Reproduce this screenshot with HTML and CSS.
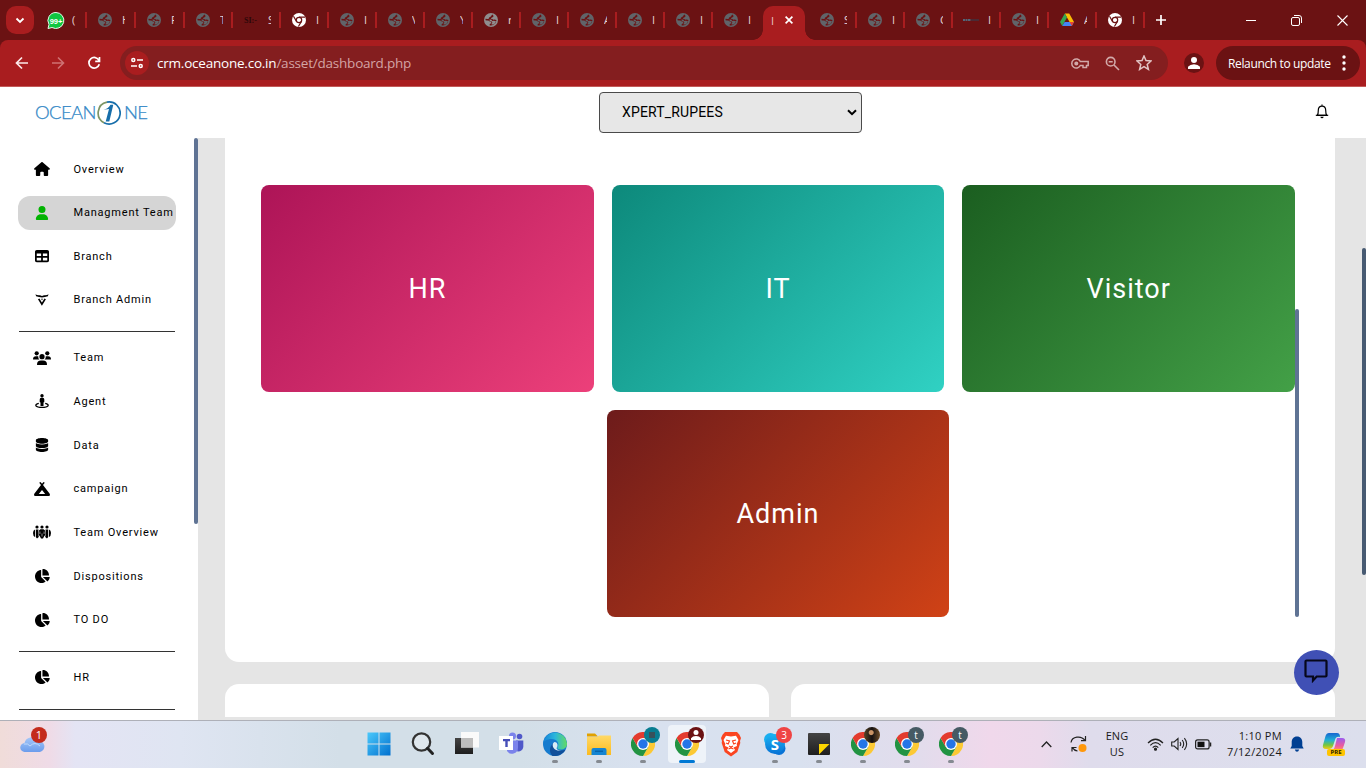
FILE: index.html
```html
<!DOCTYPE html>
<html lang="en">
<head>
<meta charset="utf-8">
<title>Dashboard</title>
<link rel="stylesheet" href="styles.css">
</head>
<body>
<svg class="sprite" aria-hidden="true">
  <defs>
    <linearGradient id="gWin" x1="0" y1="0" x2="1" y2="1"><stop offset="0" stop-color="#4cc9fb"/><stop offset="1" stop-color="#0070cf"/></linearGradient>
    <linearGradient id="gEdge" x1="0" y1="0" x2="1" y2="0"><stop offset="0" stop-color="#1683d8"/><stop offset=".5" stop-color="#2cb6dc"/><stop offset="1" stop-color="#63db63"/></linearGradient>
    <linearGradient id="gFolder" x1="0" y1="0" x2="0" y2="1"><stop offset="0" stop-color="#ffd968"/><stop offset="1" stop-color="#fcbb1e"/></linearGradient>
    <linearGradient id="gDark" x1="0" y1="0" x2="0" y2="1"><stop offset="0" stop-color="#444"/><stop offset="1" stop-color="#1e1e1e"/></linearGradient>
    <linearGradient id="gCloud" x1="0" y1="0" x2="0" y2="1"><stop offset="0" stop-color="#a5c7f8"/><stop offset="1" stop-color="#6b9cec"/></linearGradient>
    <linearGradient id="gSkype" x1="0" y1="0" x2="0" y2="1"><stop offset="0" stop-color="#1cb4f2"/><stop offset="1" stop-color="#0773d6"/></linearGradient>
    <linearGradient id="gPilotA" x1="0" y1="0" x2="0" y2="1"><stop offset="0" stop-color="#1766d1"/><stop offset=".45" stop-color="#21b1d5"/><stop offset=".75" stop-color="#76c63e"/><stop offset="1" stop-color="#f1cb16"/></linearGradient>
    <linearGradient id="gPilotB" x1="0" y1="0" x2="0" y2="1"><stop offset="0" stop-color="#9a5cf0"/><stop offset=".6" stop-color="#ed5c9c"/><stop offset="1" stop-color="#ff9862"/></linearGradient>
  </defs>
  <symbol id="globe" viewBox="0 0 14 14"><circle cx="7" cy="7" r="7" fill="currentColor"/><path d="M8.300 1.500Q9.500 2 9.500 3.200 9.300 4.200 8 4.400 7 4.600 6.900 5.800 8.500 5.800 9.300 6.700 10.800 6.300 12.500 7 12.300 10 9.500 11.800 7.500 12.800 5.500 12.300 5.500 10.800 6.800 10.500 7.800 9.800 7 8.800 5 8.700 4.300 7.600 3 7.400 1.500 7.300 1.400 6.500 1.600 5.800 3 6 4.500 5.900 4.800 4 6.500 3.700 7 2Z" fill="#6b1213"/><path d="M5.200 6.700q2.600-.5 3 1.300 2.300-.5 3.800.3-.6 2.200-2.500 3.200-1.500.3-2.200-.5 1.800-1.300.5-2.600-2.200.1-2.600-1.700Z" fill="currentColor"/></symbol>
  <symbol id="chromeWhite" viewBox="0 0 14 14"><circle cx="7" cy="7" r="7" fill="#fff"/><circle cx="7" cy="7" r="2.700" fill="none" stroke="#6b1213" stroke-width="1.200"/><path d="M7 4.200h6M4.500 8.400 1.500 3.300M9.400 8.400 6.400 13.500" stroke="#6b1213" stroke-width="1.200"/></symbol>
  <symbol id="chrome" viewBox="0 0 24 24"><path d="M1.600 6A12 12 0 0 1 22.400 6H12Z" fill="#e33b2e"/><path d="M22.400 6A12 12 0 0 1 12 24L17.200 15 12 6Z" fill="#fcc934"/><path d="M12 24A12 12 0 0 1 1.600 6L6.800 15 17.200 15Z" fill="#229342"/><path d="M1.600 6 6.800 15 12 6Z" fill="#e33b2e"/><circle cx="12" cy="12" r="6" fill="#fff"/><circle cx="12" cy="12" r="4.700" fill="#2475e8"/></symbol>
  <symbol id="pie" viewBox="0 0 576 512"><path d="M304 240V16.600c0-9 7-16.600 16-16.600C443.700 0 544 100.300 544 224c0 9-7.600 16-16.600 16H304zM32 272C32 150.700 122.100 50.300 239 34.300c9.200-1.300 17 6.100 17 15.400V288L412.500 444.500c6.700 6.700 6.200 17.700-1.500 23.100C371.800 495.600 323.800 512 272 512C139.500 512 32 404.600 32 272zm526.400 16c9.300 0 16.600 7.800 15.400 17c-7.700 55.900-34.600 105.600-73.900 142.300c-6 5.600-15.400 5.200-21.200-.7L320 288H558.400z"/></symbol>
</svg>

<header class="browser">
  <div class="tabstrip">
    <div class="tabsearch"><svg width="10" height="7" viewBox="0 0 10 7"><path d="M1.500 1.500 5 5l3.500-3.500" fill="none" stroke="#fff" stroke-width="1.800"/></svg></div>
    <div class="tab tab-first"><svg width="18" height="17" viewBox="0 0 18 17"><path d="M9 .5a8 8 0 1 1-4 15L1 16.500l1-4A8 8 0 0 1 9 .5Z" fill="#10c741" stroke="#e9f7ec"/><text x="9" y="11.500" text-anchor="middle" class="wa">99+</text></svg><span>(</span></div>
    <div class="tab wide"><svg class="fav"><use href="#globe"/></svg><span>H</span></div>
    <div class="tab wide"><svg class="fav"><use href="#globe"/></svg><span>F</span></div>
    <div class="tab"><svg class="fav"><use href="#globe"/></svg><span>T</span></div>
    <div class="tab"><b class="favtext">SI:-</b><span>S</span></div>
    <div class="tab"><svg class="fav"><use href="#chromeWhite"/></svg><span>I</span></div>
    <div class="tab"><svg class="fav"><use href="#globe"/></svg><span>I</span></div>
    <div class="tab"><svg class="fav"><use href="#globe"/></svg><span>V</span></div>
    <div class="tab"><svg class="fav"><use href="#globe"/></svg><span>Y</span></div>
    <div class="tab"><svg class="fav light"><use href="#globe"/></svg><span>r</span></div>
    <div class="tab"><svg class="fav"><use href="#globe"/></svg><span>I</span></div>
    <div class="tab"><svg class="fav"><use href="#globe"/></svg><span>A</span></div>
    <div class="tab"><svg class="fav"><use href="#globe"/></svg><span>I</span></div>
    <div class="tab"><svg class="fav"><use href="#globe"/></svg><span>I</span></div>
    <div class="tab last"><svg class="fav"><use href="#globe"/></svg><span>I</span></div>
    <div class="tab-active"><span>I</span><svg width="8" height="8" viewBox="0 0 8 8"><path d="m.6.6 6.800 6.800M7.400.6.6 7.400" stroke="#fff" stroke-width="1.700"/></svg></div>
    <div class="tab"><svg class="fav"><use href="#globe"/></svg><span>S</span></div>
    <div class="tab"><svg class="fav"><use href="#globe"/></svg><span>I</span></div>
    <div class="tab"><svg class="fav"><use href="#globe"/></svg><span>C</span></div>
    <div class="tab"><svg class="fav" viewBox="0 0 14 14"><path d="M-1 7h8" stroke="#536779" stroke-width="2" stroke-dasharray="2 .5"/><path d="M7 7h8" stroke="#3f3442" stroke-width="1.500"/></svg><span>I</span></div>
    <div class="tab"><svg class="fav"><use href="#globe"/></svg><span>I</span></div>
    <div class="tab"><svg class="fav" viewBox="0 0 14 14"><path d="M4.800.6h4.400L14 9H9.600Z" fill="#fbbc04"/><path d="M4.800.6 0 9l2.200 4L7 4.500Z" fill="#34a853"/><path d="M4.600 9H14l-2.200 4H2.200Z" fill="#4285f4"/><path d="M9.600 9H14l-2.200 4Z" fill="#ea4335"/></svg><span>A</span></div>
    <div class="tab"><svg class="fav"><use href="#chromeWhite"/></svg><span>I</span></div>
    <svg class="newtab" width="10" height="10" viewBox="0 0 10 10"><path d="M5 0v10M0 5h10" stroke="#fff" stroke-width="1.700"/></svg>
    <div class="winctl">
      <svg width="10" height="11" viewBox="0 0 10 11"><path d="M0 5.500h10" stroke="#fff"/></svg>
      <svg width="11" height="11" viewBox="0 0 11 11"><rect x=".5" y="2.500" width="8" height="8" rx="1.500" fill="none" stroke="#fff"/><path d="M3 .5h5a2.500 2.500 0 0 1 2.500 2.500v5" fill="none" stroke="#fff"/></svg>
      <svg width="11" height="11" viewBox="0 0 11 11"><path d="m.5.5 10 10m0-10-10 10" stroke="#fff" stroke-width="1.100"/></svg>
    </div>
  </div>
  <div class="toolbar">
    <svg class="nav" viewBox="0 0 14 14"><path d="M13 7H2M7 1.500 1.500 7 7 12.500" fill="none" stroke="#fbe9e9" stroke-width="1.700"/></svg>
    <svg class="nav" viewBox="0 0 14 14"><path d="M1 7h11M7 1.500 12.500 7 7 12.500" fill="none" stroke="#cf7273" stroke-width="1.600"/></svg>
    <svg class="nav" viewBox="0 0 14 14"><path d="M12 4.500A5.300 5.300 0 1 0 12.300 8.300M12.500 1v4.300H8.200" fill="none" stroke="#fff" stroke-width="1.700"/></svg>
    <div class="address">
      <div class="siteinfo"><svg width="12" height="12" viewBox="0 0 12 12" fill="none" stroke="#fff" stroke-width="1.500"><circle cx="2.300" cy="3" r="1.500"/><path d="M6 3h6M0 9h6"/><circle cx="9.700" cy="9" r="1.500"/></svg></div>
      <div class="url"><b>crm.oceanone.co.in</b>/asset/dashboard.php</div>
      <div class="addr-icons">
        <svg width="18" height="11" viewBox="0 0 18 11" fill="none" stroke="#d2a9a9" stroke-width="1.500"><path d="M9.300 3.500a4.500 4.500 0 1 0 0 4H12v2h3.500v-2h1.700v-4Z"/><circle cx="5.300" cy="5.500" r="1.300" fill="#d2a9a9"/></svg>
        <svg width="15" height="15" viewBox="0 0 15 15" fill="none" stroke="#d2a9a9" stroke-width="1.600"><circle cx="5.700" cy="5.700" r="4.300"/><path d="m9 9 5 5M3.700 5.700h4"/></svg>
        <svg width="16" height="16" viewBox="0 0 16 16"><path d="m8 1 2 4.600 5 .4-3.800 3.400 1.200 5L8 11.700l-4.400 2.700 1.200-5L1 6l5-.4Z" fill="none" stroke="#e2c4c4" stroke-width="1.500"/></svg>
      </div>
    </div>
    <div class="profile"><svg width="12" height="12" viewBox="0 0 12 12" fill="#fff"><circle cx="6" cy="3" r="3"/><path d="M0 12V9.800Q2 7.200 6 7.200t6 2.600V12Z"/></svg></div>
    <div class="relaunch"><span>Relaunch to update</span><svg width="4" height="16" viewBox="0 0 4 16" fill="#fff"><circle cx="2" cy="2" r="1.700"/><circle cx="2" cy="8" r="1.700"/><circle cx="2" cy="14" r="1.700"/></svg></div>
  </div>
</header>

<div class="page">
  <div class="topbar">
    <div class="logo"><span class="logo-l">OCEAN</span><svg width="24" height="24" viewBox="0 0 24 24" fill="none"><path d="M10 1.200A11 11 0 0 0 7 21.700" stroke="#7c9565" stroke-width="1.700"/><path d="M10 1.200A11 11 0 1 1 7 21.700" stroke="#176eaa" stroke-width="1.700"/><path d="M6.500 8.800c3.500-.5 5.500-2.700 7-5h2.800L12.300 20.500H8.700l3.300-12.500Z" fill="#176eaa"/></svg><span class="logo-r">NE</span></div>
    <div class="select"><span>XPERT_RUPEES</span><svg width="10" height="7" viewBox="0 0 10 7"><path d="m1 1.200 4 4 4-4" fill="none" stroke="#000" stroke-width="2"/></svg></div>
    <svg class="bell" width="14" height="15" viewBox="0 0 14 15"><path d="M7 .4v1.500M2.300 11.300c1-1.300 1-2.800 1-5C3.300 3.700 4.800 2.100 7 2.100s3.700 1.600 3.700 4.200c0 2.200 0 3.700 1 5Z" fill="none" stroke="#000" stroke-width="1.200"/><path d="M.8 11.300h12.400" stroke="#000" stroke-width="1.200"/><path d="M5.300 12.800h3.400Q8.300 14.300 7 14.300t-1.700-1.500Z"/></svg>
  </div>
  <div class="body">
    <nav class="sidebar">
      <a class="item"><svg viewBox="0 0 576 512"><path d="M575.800 255.500c0 18-15 32.100-32 32.100h-32l.7 184.400c0 22.100-17.900 40-40 40H392c-22.100 0-40-17.900-40-40V384c0-17.700-14.300-32-32-32H256c-17.700 0-32 14.300-32 32v88c0 22.100-17.900 40-40 40H104c-22.100 0-40-17.900-40-40V287.600H32c-18 0-32-14-32-32.100c0-9 3-17 10-24L266.400 8c7-7 15-8 22-8s15 2 21 7L564.800 231.500c8 7 12 15 11 24z"/></svg>Overview</a>
      <a class="item on"><svg viewBox="0 0 448 512"><path d="M224 256A128 128 0 1 0 224 0a128 128 0 1 0 0 256zm-45.700 48C79.800 304 0 383.800 0 482.300C0 498.700 13.300 512 29.700 512H418.300c16.400 0 29.700-13.300 29.700-29.700C448 383.800 368.200 304 269.700 304H178.300z"/></svg>Managment Team</a>
      <a class="item"><svg viewBox="0 0 512 512"><path d="M64 256V160H224v96H64zm0 64H224v96H64V320zm224 96V320H448v96H288zM448 256H288V160H448v96zM64 32C28.700 32 0 60.700 0 96V416c0 35.300 28.700 64 64 64H448c35.300 0 64-28.700 64-64V96c0-35.300-28.700-64-64-64H64z"/></svg>Branch</a>
      <a class="item"><svg viewBox="0 0 14 14"><path d="M.5 1.200Q2 2.500 5 2.200L7 3.100l2-.9q3 .3 4.500-1l-.6 2.100Q10 4.300 7 4.400 4 4.300 1.100 3.300Z"/><path d="m3.700 5.900 3.200 5.300 3.300-5.300" fill="none" stroke="#000" stroke-width="1.700"/><path d="M6 5.800h2l-1 1.400Z"/></svg>Branch Admin</a>
      <hr>
      <a class="item"><svg viewBox="0 0 18 14"><circle cx="3.700" cy="2.300" r="2.100"/><circle cx="14.300" cy="2.300" r="2.100"/><circle cx="9" cy="5.700" r="2.600"/><path d="M0 8.200Q0 5.200 3 5.200h2.200q-.2 2.200 1.200 3.400H.6Q0 8.600 0 8.200ZM18 8.200q0-3-3-3h-2.200q.2 2.200-1.200 3.400h5.800q.6 0 .6-.4ZM4 13.400q0-4 4-4h2q4 0 4 4 0 .6-.6.6H4.600Q4 14 4 13.400Z"/></svg>Team</a>
      <a class="item"><svg viewBox="0 0 14 14"><circle cx="7" cy="1.700" r="1.700"/><path d="M4.700 5.500q0-1.700 1.500-1.700h1.600q1.500 0 1.500 1.700V8l-.8.400V12h-3V8.400L4.700 8Z"/><path d="M3.800 9.400C-1.300 10.500.3 13.300 7 13.300s8.300-2.800 3.200-3.900" fill="none" stroke="#000" stroke-width="1.300"/></svg>Agent</a>
      <a class="item"><svg viewBox="0 0 448 512"><path d="M448 80v48c0 44.200-100.300 80-224 80S0 172.200 0 128V80C0 35.800 100.300 0 224 0S448 35.800 448 80zM393.200 214.700c20.800-7.400 39.900-16.900 54.800-28.600V288c0 44.200-100.300 80-224 80S0 332.200 0 288V186.100c14.900 11.800 34 21.200 54.800 28.600C99.700 230.700 159.500 240 224 240s124.300-9.300 169.200-25.300zM0 346.100c14.900 11.800 34 21.200 54.800 28.600C99.700 390.700 159.500 400 224 400s124.300-9.300 169.200-25.300c20.800-7.400 39.900-16.900 54.800-28.600V432c0 44.200-100.300 80-224 80S0 476.200 0 432V346.100z"/></svg>Data</a>
      <a class="item"><svg viewBox="0 0 16 14"><path fill-rule="evenodd" d="M5.200.8 6.500 0 8 1.700 9.500 0l1.300.8L9 3.100l6.700 8.700q.9 2.200-1 2.200H1.300q-1.900 0-1-2.200L7 3.100ZM8 8l-3.200 4h6.400Z"/></svg>campaign</a>
      <a class="item"><svg viewBox="0 0 18 14"><circle cx="4" cy="2" r="1.600"/><circle cx="9" cy="2" r="1.600"/><circle cx="14" cy="2" r="1.600"/><path d="M2 4.500Q0 5 0 8t2 4ZM16 4.500Q18 5 18 8t-2 4ZM2.800 4.500h2.700Q4.500 8 5.800 12L4 13.500 2.800 12ZM15.200 4.500h-2.700q1 3.500-.3 7.500l1.800 1.500 1.200-1.500ZM7.500 4.300h3q2 .7 2 3.700 0 2.500-1.500 3.500l-1 2H8l-1-2Q5.500 10.500 5.500 8q0-3 2-3.700Z"/><path d="M9 8.500v3M6.900 6.500v2.500M11.100 6.500v2.500" stroke="#ccc" stroke-width=".7"/></svg>Team Overview</a>
      <a class="item"><svg><use href="#pie"/></svg>Dispositions</a>
      <a class="item"><svg><use href="#pie"/></svg>TO DO</a>
      <hr>
      <a class="item"><svg><use href="#pie"/></svg>HR</a>
      <hr>
      <i class="side-thumb"></i>
    </nav>
    <main class="main">
      <section class="panel">
        <div class="cards">
          <div class="card hr">HR</div><div class="card it">IT</div><div class="card visitor">Visitor</div><div class="card admin">Admin</div>
          <i class="cards-thumb"></i>
        </div>
      </section>
      <div class="lower"><section></section><section></section></div>
    </main>
  </div>
  <i class="page-thumb"></i>
  <div class="chat"><svg width="24" height="24" viewBox="0 0 24 24"><path d="M2.500 1.500h19q1 0 1 1v14q0 1-1 1H12.700L9 21.500v-4H2.500q-1 0-1-1v-14q0-1 1-1Z" fill="none" stroke="#06071a" stroke-width="2.200"/></svg></div>
</div>

<footer class="taskbar">
  <div class="weather"><svg width="25" height="16" viewBox="0 0 25 16"><path d="M5 16a4.500 4.500 0 0 1-.5-9A7 7 0 0 1 17.500 5 5.500 5.500 0 0 1 20 16Z" fill="url(#gCloud)"/><path d="M4 8q4-1 6 2 5-5 10 0" stroke="#bfd9fb" fill="none"/></svg><em>1</em></div>
  <div class="apps">
    <div class="app"><svg viewBox="0 0 24 24"><path d="M.5.5h11v11H.5ZM12.500.5h11v11h-11ZM.5 12.500h11v11H.5ZM12.500 12.500h11v11h-11Z" fill="url(#gWin)"/></svg></div>
    <div class="app"><svg viewBox="0 0 24 24"><circle cx="10.500" cy="10" r="8.700" fill="#dfe7ed" stroke="#333" stroke-width="2.200"/><path d="m16.500 16.300 5 5.200" stroke="#222" stroke-width="3" stroke-linecap="round"/></svg></div>
    <div class="app"><svg viewBox="0 0 24 24"><path d="M0 6h18v16H0Z" fill="url(#gDark)"/><path d="M6 0h18v15.500H6Z" fill="#fafafa"/><path d="M6 6h12v9.500H6Z" fill="#bdbdbd"/></svg></div>
    <div class="app"><svg viewBox="0 0 24 24"><circle cx="13.500" cy="4" r="3.500" fill="#7b83eb"/><circle cx="20.500" cy="4.500" r="2.800" fill="#5059c9"/><path d="M17 8.500h7.300V15a5 5 0 0 1-6 4.500Z" fill="#5059c9"/><path d="M8 8.500h11V16a6 6 0 0 1-11 3Z" fill="#7b83eb"/><path d="M0 4h14v14H0Z" fill="#fff"/><path d="M4 7h7v2.200H8.700V15H6.300V9.200H4Z" fill="#464eb8"/></svg></div>
    <div class="app run"><svg viewBox="0 0 24 24"><circle cx="12" cy="12" r="12" fill="#167bce"/><path d="M.2 10.500A12 12 0 0 1 24 11.500c0 4-3 6-6.500 6-2.500 0-4-1-3-2.500C17 11.500 14 7 8.500 7 4 7 .5 9.500.2 10.500Z" fill="url(#gEdge)"/><path d="M9.500 24C5 20 7 12.500 11.500 10.500 9 15 13 20.500 22.500 17.700 20 22 15 24.500 9.500 24Z" fill="#11509b"/><path d="M11.500 10c-2 1-2.500 4-.5 6.500 2 2.200 5 2.500 7 1.700-4 0-5-1.500-4-3 1.200-2 .5-5-2.500-5.200Z" fill="#d9edf6"/></svg></div>
    <div class="app run"><svg viewBox="0 0 24 24"><path d="M0 1.500h8l3 3H0Z" fill="#e1a100"/><path d="M0 5h10l2-1.500h12V23H0Z" fill="url(#gFolder)"/><path d="M4.500 23v-5q0-2 2-2h11q2 0 2 2v5Z" fill="#1585d2"/><path d="M8 19.300h8" stroke="#0864aa" stroke-width="1.500"/></svg></div>
    <div class="app run"><svg><use href="#chrome"/></svg><em class="teal"><i></i></em></div>
    <div class="app run cur"><svg><use href="#chrome"/></svg><em class="maroon"><svg width="10" height="10" viewBox="0 0 12 12" fill="#fff"><circle cx="6" cy="3" r="3"/><path d="M0 12V9.800Q2 7.200 6 7.200t6 2.600V12Z"/></svg></em></div>
    <div class="app"><svg viewBox="0 0 24 24"><path d="M6 0h12l2.300 2.500L22 6l-1 3 .3 2-3 9L12 24.500 5.700 20l-3-9 .3-2-1-3 1.700-3.500Z" fill="#fb4521"/><path d="M12 4.500 17 3.700 19.500 8l-1.800 4 .3 2-3.500 1.500L16 18l-4 3-4-3 1.500-2.500L6 14l.3-2L4.500 8 7 3.700Z" fill="#fff"/><path d="m7 8 3.500 1L9.200 12 7 11M17 8l-3.500 1 1.300 3 2.200-1M10 14l2 1 2-1M9.500 17l2.500-1 2.500 1" fill="none" stroke="#fb4521" stroke-width="1.200"/></svg></div>
    <div class="app run"><svg viewBox="0 0 24 24"><circle cx="7.500" cy="7.500" r="6.500" fill="#18aef0"/><circle cx="16" cy="16.500" r="6.500" fill="#0873d6"/><circle cx="12" cy="12" r="10" fill="url(#gSkype)"/><text x="11.800" y="17.500" text-anchor="middle" class="skype">S</text></svg><em class="red">3</em></div>
    <div class="app run"><svg viewBox="0 0 24 24"><rect x="1" y="1" width="22" height="22" rx="1" fill="url(#gDark)"/><path d="M12 12h10.500L12 22.500Z" fill="#fcd500"/></svg></div>
    <div class="app run"><svg><use href="#chrome"/></svg><em class="photo"></em></div>
    <div class="app run"><svg><use href="#chrome"/></svg><em class="slate">t</em></div>
    <div class="app run"><svg><use href="#chrome"/></svg><em class="slate">t</em></div>
  </div>
  <div class="tray">
    <svg class="t-up" width="11" height="7" viewBox="0 0 11 7"><path d="m.7 6 4.800-5 4.800 5" fill="none" stroke="#222" stroke-width="1.300"/></svg>
    <svg class="t-sync" width="17" height="18" viewBox="0 0 17 18"><path d="M1 7.500C2 1.500 11 0 15 5.500M15.500 1v4.700H11M2 16.500v-4h4.500M2.300 12.700q2 3 5.200 3.300" fill="none" stroke="#222" stroke-width="1.200"/><circle cx="12.500" cy="13" r="4" fill="#ff980b"/></svg>
    <div class="lang">ENG<br>US</div>
    <svg class="t-wifi" width="17" height="13" viewBox="0 0 17 13" fill="none" stroke="#222" stroke-width="1.200"><path d="M1 5q7.500-7.500 15 0M3.300 7.300q5.200-5.200 10.400 0M5.700 9.600q2.800-2.800 5.600 0"/><circle cx="8.500" cy="11.200" r="1" fill="#222"/></svg>
    <svg class="t-vol" width="17" height="14" viewBox="0 0 17 14" fill="none" stroke="#222" stroke-width="1.100"><path d="M.7 5v4h2.500L7 12.500v-11L3.200 5ZM9 5q1.500 2 0 4M11.200 3q3 4 0 8M13.400 1.200q4.500 5.800 0 11.600"/></svg>
    <svg class="t-bat" width="17" height="11" viewBox="0 0 17 11"><rect x=".6" y=".9" width="13.500" height="9" rx="2" fill="none" stroke="#222" stroke-width="1.200"/><rect x="2.500" y="2.700" width="7" height="5.400" fill="#111"/><path d="M15.500 3.500v4" stroke="#222" stroke-width="1.500"/></svg>
    <div class="clock">1:10 PM<br>7/12/2024</div>
    <svg class="t-bell" width="14" height="16" viewBox="0 0 14 16" fill="#003f92"><path d="M7 .5c3.500 0 5.300 2.500 5.300 5.500v4l1.400 2.500H.3L1.700 10V6C1.700 3 3.500.5 7 .5ZM4.800 13.500h4.400Q8.500 15.700 7 15.700t-2.200-2.200Z"/></svg>
    <div class="pilot"><svg width="24" height="20" viewBox="0 0 24 20"><path d="M7 1h8q3 0 3 4-4-1-5 3l-2 6q-1 3-4 3H4q-4 0-3-4l2.500-9Q4.500 1 7 1Z" fill="url(#gPilotA)"/><path d="M15 6h5q4 0 3 4l-2 6q-1 3-4 3H9q3-1 4-5Z" fill="url(#gPilotB)"/></svg><b>PRE</b></div>
  </div>
</footer>
</body>
</html>
```
FILE: styles.css
```css
* { box-sizing: border-box; }
body { margin: 0; width: 1366px; height: 768px; overflow: hidden; display: flex; flex-direction: column; font-family: Roboto, sans-serif; background: #e5e5e5; }
svg { display: block; flex: none; }
em, i { font-style: normal; }
.sprite { position: absolute; width: 0; height: 0; }

/* browser chrome */
.browser { height: 87px; flex: none; background: #6b1213; font-family: "Open Sans", "Noto Sans", sans-serif; }
.tabstrip { height: 40px; display: flex; align-items: center; }
.tabsearch { width: 28px; height: 28px; margin: 0 5px 0 6px; border-radius: 10px; background: #a91d1f; display: flex; align-items: center; justify-content: center; flex: none; }
.tab { width: 48px; height: 16px; flex: none; display: flex; align-items: center; gap: 10px; padding-left: 11px; border-right: 2px solid #a91d1f; color: #e6d5d5; font-size: 11px; }
.tab.wide { width: 49px; }
.tab.last { border-color: transparent; margin-right: 2px; }
.tab-first { padding-left: 8px; gap: 7px; }
.tab span { width: 3px; overflow: hidden; line-height: 16px; white-space: nowrap; }
.tab-first span { width: 4px; }
.fav { width: 14px; height: 14px; color: #606469; overflow: visible; }
.fav.light { color: #8f8d8e; }
.favtext { width: 14px; font: bold 8px "Liberation Serif", serif; color: #2c080a; white-space: nowrap; }
.wa { font: bold 7.5px "Liberation Sans", sans-serif; fill: #fff; }
.tab-active { position: relative; width: 42px; height: 34px; align-self: flex-end; margin-right: 4px; padding: 0 12px 6px 8px; border-radius: 10px 10px 0 0; background: #a91d1f; display: flex; align-items: center; justify-content: space-between; flex: none; color: #e6c5c5; font-size: 11px; }
.tab-active::before, .tab-active::after { content: ""; position: absolute; bottom: 0; width: 10px; height: 10px; }
.tab-active::before { left: -10px; background: radial-gradient(circle at 0 0, transparent 9.500px, #a91d1f 10px); }
.tab-active::after { right: -10px; background: radial-gradient(circle at 100% 0, transparent 9.500px, #a91d1f 10px); }
.newtab { margin-left: 11px; }
.winctl { margin-left: auto; padding-right: 18px; display: flex; gap: 35px; }
.toolbar { height: 47px; background: #a91d1f; border-bottom: 1px solid #c25a58; border-radius: 8px 8px 0 0; display: flex; align-items: center; padding: 0 6px 0 15px; }
.nav { width: 14px; height: 14px; margin-right: 22px; }
.address { width: 1048px; height: 34px; margin-left: -3px; border-radius: 17px; background: #841e1f; display: flex; align-items: center; padding: 0 16px 0 5px; flex: none; }
.siteinfo { width: 24px; height: 24px; border-radius: 50%; background: #a91d1f; display: flex; align-items: center; justify-content: center; margin-right: 8px; }
.url { font-size: 13.500px; letter-spacing: -.22px; color: #d4a4a4; white-space: nowrap; }
.url b { font-weight: 400; color: #fff; }
.addr-icons { margin-left: auto; display: flex; align-items: center; gap: 16px; }
.profile { width: 20px; height: 20px; margin: 0 12px 0 16px; border-radius: 50%; background: #6b1213; display: flex; align-items: center; justify-content: center; flex: none; }
.relaunch { width: 144px; height: 34px; border-radius: 17px; background: #6b1213; color: #fff; font-size: 12px; display: flex; align-items: center; justify-content: space-between; padding: 0 14px 0 12px; white-space: nowrap; flex: none; }
.relaunch span { letter-spacing: -.36px; }

/* dashboard */
.page { position: relative; height: 633px; flex: none; display: flex; flex-direction: column; }
.topbar { height: 51px; background: #fff; display: flex; align-items: center; flex: none; padding: 0 37px 0 35px; }
.logo { display: flex; align-items: center; width: 112px; font: 300 18.500px Lato, sans-serif; color: #3287c6; -webkit-text-stroke: .25px #3287c6; margin-right: 452px; }
.logo-l { width: 63px; letter-spacing: -.6px; }
.logo-r { margin-left: 3px; letter-spacing: -.9px; }
.logo-l, .logo-r { position: relative; top: -1px; }
.select { width: 263px; height: 41px; border: 1px solid #4a4a4a; border-radius: 4px; background: #e7e7e7; display: flex; align-items: center; justify-content: space-between; padding: 0 4px 0 22px; font-size: 14px; letter-spacing: .15px; color: #000; }
.select span { margin-top: -1px; }
.bell { margin: -2px 0 0 auto; }
.body { height: 582px; display: flex; }
.sidebar { position: relative; width: 198px; background: #fff; padding: 14px 22px 0 18px; overflow: hidden; flex: none; display: flex; flex-direction: column; }
.item { height: 34px; margin-bottom: 9.670px; border-radius: 12px; display: flex; align-items: center; gap: 22.500px; padding-left: 15px; font-size: 11px; letter-spacing: .8px; color: #000; white-space: nowrap; flex: none; }
.item svg { width: 18px; height: 14px; }
.item.on { background: #d5d5d5; }
.item.on svg { fill: #02b302; }
.sidebar hr { width: 156px; height: 1px; border: 0; margin: 4.500px 1px 8.600px; background: #333; flex: none; }
.side-thumb { position: absolute; right: 0; top: 0; width: 4px; height: 386px; border-radius: 2px; background: #5f7394; }
.main { flex: 1; padding: 0 31px 3px 27px; display: flex; flex-direction: column; gap: 22px; }
.panel { height: 524px; background: #fff; border-radius: 0 0 14px 14px; padding: 47px 36px 0; flex: none; }
.cards { position: relative; width: 1034px; display: flex; flex-wrap: wrap; justify-content: center; gap: 18px; }
.card { width: 332.660px; height: 207px; border-radius: 8px; display: flex; align-items: center; justify-content: center; color: #fff; font-size: 27px; letter-spacing: 1px; }
.hr { background: linear-gradient(135deg, #ad1457, #ec407a); }
.it { background: linear-gradient(135deg, #0d897b, #30d1c3); }
.visitor { background: linear-gradient(135deg, #1b5e20, #43a047); }
.admin { width: 342px; background: linear-gradient(135deg, #6d1b1b, #d04216); }
.cards-thumb { position: absolute; right: -4px; bottom: 0; width: 4px; height: 308px; border-radius: 2px; background: #5f7394; }
.lower { flex: 1; display: grid; grid-template-columns: 1fr 1fr; gap: 22px; }
.lower section { background: #fff; border-radius: 14px 14px 0 0; }
.page-thumb { position: absolute; right: 0; top: 161px; width: 4px; height: 327px; border-radius: 2px; background: #475a72; }
.chat { position: absolute; left: 1294px; top: 563px; width: 45px; height: 45px; border-radius: 50%; background: #4050b5; display: flex; justify-content: center; padding: 9px 1px 0 0; }

/* taskbar */
.taskbar { height: 48px; flex: none; border-top: 1px solid #aeb0b8; padding-bottom: 1px; display: flex; align-items: center; font-family: "Open Sans", "Noto Sans", sans-serif; background: linear-gradient(90deg, #f0dcd9 0, #efdbe7 50px, #e4e4f4 75px, #dfe5f2 180px, #d3dfe8 340px, #d3dfe8 520px, #d8e1ef 640px, #d9e1ef 800px, #e2dcec 920px, #f0d8eb 990px, #ecd9eb 1040px, #dfdcec 1090px, #dcdfed 1366px); }
.weather { position: relative; width: 28px; height: 47px; margin: 0 316px 0 20px; padding-top: 15px; flex: none; }
.taskbar em { position: absolute; width: 16px; height: 16px; border-radius: 50%; color: #fff; font-size: 10px; display: flex; align-items: center; justify-content: center; }
.weather em { right: 1px; top: 6px; background: #c42b1c; font-size: 11px; }
.apps { display: flex; width: 616px; margin-left: -7px; flex: none; }
.app { position: relative; width: 38px; height: 38px; margin: 0 3px; display: flex; align-items: center; justify-content: center; flex: none; border-radius: 4px; }
.app > svg { width: 24px; height: 24px; overflow: visible; }
.app.run::after { content: ""; position: absolute; bottom: 0; left: 16px; width: 6px; height: 3px; border-radius: 2px; background: #858a91; }
.app.cur { background: #eef3f9; }
.app.cur::after { left: 11px; width: 16px; background: #0078d4; }
.app em { top: 2px; right: 2px; }
.app .teal { background: #087d91; }
.teal i { width: 6px; height: 6px; background: #38515a; }
.app .maroon { background: #6b1213; }
.app .red { background: #ef4444; }
.app .photo { background: radial-gradient(circle at 45% 35%, #c99365 2px, transparent 3px), linear-gradient(90deg, #5a4526, #151010 50%, #6d4c27); }
.app .slate { background: #455a64; }
.skype { font: bold 15px "Open Sans", sans-serif; fill: #fff; }
.tray { margin-left: auto; width: 328px; display: flex; align-items: center; font-size: 11px; line-height: 16px; color: #1a1a1a; padding-left: 3px; flex: none; }
.t-sync { margin-left: 18px; }
.lang { width: 40px; margin: 0 8px 0 9px; text-align: center; letter-spacing: .1px; padding-left: 2px; }
.lang, .clock { white-space: nowrap; margin-top: -1px; }
.t-wifi { margin-left: 3px; }
.t-vol { margin-left: 7px; }
.t-bat { margin-left: 7px; }
.clock { width: 70px; text-align: right; margin-right: 8px; letter-spacing: .32px; }
.pilot { position: relative; margin-left: 18px; width: 24px; height: 24px; }
.pilot b { position: absolute; left: 5px; bottom: 0; width: 18px; height: 7px; border-radius: 2px; background: #ffc400; font-size: 6px; line-height: 7px; text-align: center; color: #2b2100; }
```
